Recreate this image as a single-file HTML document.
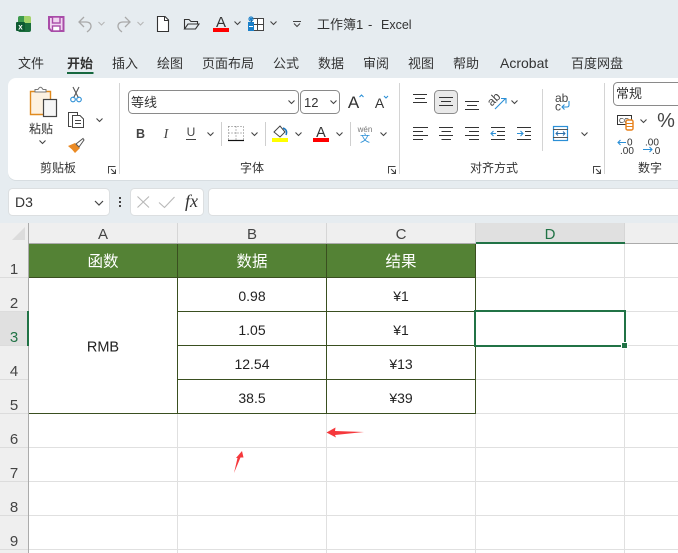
<!DOCTYPE html>
<html><head><meta charset="utf-8"><style>
html,body{margin:0;padding:0;width:678px;height:553px;overflow:hidden;background:#e6ecf0}
svg{display:block;position:absolute;left:0;top:0}
text{font-family:"Liberation Sans","Noto Sans CJK SC",sans-serif;fill:#333}
.t{font-size:13px}
.c{text-anchor:middle}
.cell{font-size:14px;text-anchor:middle;fill:#222}
.hd{font-size:15px;text-anchor:middle;fill:#444}
.rn{font-size:15px;text-anchor:middle;fill:#444}
.ch{fill:none;stroke:#444;stroke-width:1.1}
.ic{fill:none;stroke:#444;stroke-width:1}
.bl{fill:none;stroke:#2b8fd6;stroke-width:1.1}
.hl{stroke:#e0e0e0;stroke-width:1}
.tb{stroke:#3a4f20;stroke-width:1}
</style></head><body>
<svg width="678" height="553" viewBox="0 0 678 553" xmlns="http://www.w3.org/2000/svg">
<defs>
<path id="chev" d="M-3 -1.5L0 1.500L3 -1.500"/>
<path id="laun" d="M0.500 7.500V0.500H7.500M3 3L7 7M7.500 3.500V7.500H3.500"/>
</defs>
<rect width="678" height="553" fill="#e6ecf0"/>

<!-- QAT -->
<path d="M18 18Q18 16 20 16H24V23H18z" fill="#3d9a4e"/>
<path d="M24 16H29Q31 16 31 18V23H24z" fill="#a4d36a"/>
<path d="M24 23H31V30Q31 32 29 32H20Q18 32 18 30V28H24z" fill="#1a6e3c"/>
<rect x="16" y="22" width="9" height="9" rx="1" fill="#0e5a32"/>
<text x="20.500" y="29.500" font-size="8" font-weight="bold" text-anchor="middle" style="fill:#fff">x</text>
<path d="M49 17H63.500V31H51.500L49 28.500z" fill="#f0d6f0" stroke="#a94ca8" stroke-width="2"/>
<rect x="52.500" y="17" width="7.500" height="6" fill="#f0d6f0" stroke="#a94ca8" stroke-width="1.400"/>
<rect x="52.500" y="26" width="7.500" height="5" fill="#fff" stroke="#a94ca8" stroke-width="1.400"/>
<path d="M84 17L79 22L84 27M79 22H86Q91 22 91 26.500Q91 29 87 32" fill="none" stroke="#a9a9a9" stroke-width="1.300"/>
<use href="#chev" x="101.500" y="23.500" fill="none" stroke="#b5b5b5"/>
<path d="M125 17L130 22L125 27M130 22H123Q118 22 118 26.500Q118 29 122 32" fill="none" stroke="#a9a9a9" stroke-width="1.300"/>
<use href="#chev" x="140.500" y="23.500" fill="none" stroke="#b5b5b5"/>
<path d="M157.500 16.500H165L168.500 20V31.500H157.500z" fill="#fff" stroke="#333" stroke-width="1.100"/>
<path d="M164.500 16.500V20.500H168.500" fill="none" stroke="#333"/>
<path d="M184.500 29V19.500H189L191 21.500H197.500V24M184.500 29H195.500L199 24H188z" fill="none" stroke="#333" stroke-width="1.100"/>
<text x="221" y="27" font-size="15" class="c" style="fill:#333">A</text>
<rect x="213" y="28" width="16" height="4" fill="#f00"/>
<use href="#chev" x="237.500" y="23" class="ch"/>
<rect x="251.500" y="18.500" width="12" height="12" fill="#fff" stroke="#444"/>
<path d="M257.500 18.500V30.500M251.500 24.500H263.500" stroke="#444"/>
<rect x="248" y="22" width="6" height="9" fill="#1b80c9"/>
<path d="M251 16V22M248 19H254M249 17L253 21M253 17L249 21" stroke="#1b80c9"/>
<path d="M249 26.500H253" stroke="#fff"/>
<use href="#chev" x="273.500" y="23" class="ch"/>
<path d="M293 21.500H301" stroke="#444"/><use href="#chev" x="297" y="25" class="ch"/>
<text x="317" y="29" class="t">工作簿1</text><text x="368" y="29" class="t">-</text><text x="381" y="29" style="font-size:12.500px">Excel</text>

<!-- tabs -->
<text x="18" y="68" class="t">文件</text>
<text x="67" y="68" class="t" font-weight="bold">开始</text>
<rect x="67" y="72" width="26.500" height="2" fill="#17683f"/>
<text x="112" y="68" class="t">插入</text>
<text x="157" y="68" class="t">绘图</text>
<text x="202" y="68" class="t">页面布局</text>
<text x="273" y="68" class="t">公式</text>
<text x="318" y="68" class="t">数据</text>
<text x="363" y="68" class="t">审阅</text>
<text x="408" y="68" class="t">视图</text>
<text x="453" y="68" class="t">帮助</text>
<text x="500" y="68" style="font-size:14px">Acrobat</text>
<text x="571" y="68" class="t">百度网盘</text>

<!-- ribbon -->
<rect x="8" y="79" width="690" height="102" rx="8" fill="#cdd3d7" opacity=".6"/>
<rect x="8" y="78" width="690" height="102" rx="8" fill="#fff"/>
<path d="M119.500 83V174M399.500 83V174M604.500 83V174M542.500 89V151" stroke="#d4d4d4"/>

<!-- clipboard -->
<path d="M30.500 91.500H50.500V114.500H30.500z" fill="#fdf1e0" stroke="#e08a1e" stroke-width="1.400"/>
<path d="M35 92V89.500H38Q40.500 85 43 89.500H46V92z" fill="#fff" stroke="#777"/>
<rect x="43.500" y="99.500" width="13" height="17" fill="#f6f6f6" stroke="#444" stroke-width="1.200"/>
<text x="41" y="133" class="c" style="font-size:12px">粘贴</text>
<use href="#chev" x="42.500" y="142" class="ch"/>
<path d="M73 87L78.500 98M79 87L73.500 98" fill="none" stroke="#555" stroke-width="1.100"/>
<circle cx="73" cy="99.500" r="2.300" class="bl"/><circle cx="79" cy="99.500" r="2.300" class="bl"/>
<path d="M71.500 126.500H68.500V112.500H77.500V115" class="ic"/>
<path d="M72.500 115.500H80L83.500 119V127.500H72.500z" class="ic"/>
<path d="M75 120.500H81M75 123.500H81" stroke="#444"/>
<use href="#chev" x="99.500" y="120" class="ch"/>
<path d="M68 146L75 143L80 148L75 153Q72 149 68 146z" fill="#ea8a24"/>
<path d="M76 144L83 138.500L84 140L79 147z" fill="none" stroke="#555"/>
<text x="58" y="172" class="c" style="font-size:12px">剪贴板</text>
<use href="#laun" x="108" y="166" class="ic"/>

<!-- font -->
<rect x="128.500" y="90.500" width="170" height="23" rx="4" fill="#fff" stroke="#8a8a8a"/>
<text x="131" y="107" class="t">等线</text>
<use href="#chev" x="291.500" y="102" class="ch"/>
<rect x="300.500" y="90.500" width="39" height="23" rx="4" fill="#fff" stroke="#8a8a8a"/>
<text x="304" y="107" class="t">12</text>
<use href="#chev" x="333.500" y="102" class="ch"/>
<text x="353.500" y="108" font-size="17" class="c" style="fill:#333">A</text>
<path d="M359.500 97L361.500 95L363.500 97" class="bl"/>
<text x="379.500" y="108" font-size="14" class="c" style="fill:#333">A</text>
<path d="M384 96L386 98L388 96" class="bl"/>
<text x="140.500" y="138" font-size="12.500" font-weight="bold" class="c" style="fill:#444">B</text>
<text x="166" y="138" font-size="14" font-style="italic" class="c" style="font-family:'Liberation Serif';fill:#444">I</text>
<text x="191" y="136" font-size="12" class="c" style="fill:#444">U</text>
<path d="M186 139.500H196" stroke="#444"/>
<use href="#chev" x="210.500" y="134" class="ch"/>
<path d="M221.500 122V146M265.500 122V146M350.500 122V146" stroke="#cfcfcf"/>
<path d="M228.500 126.500H243.500V139.500M228.500 126.500V139.500M236 126.500V139.500M228.500 133H243.500" fill="none" stroke="#777" stroke-dasharray="1 2"/>
<path d="M228 140.500H244" stroke="#111" stroke-width="1.200"/>
<use href="#chev" x="254.500" y="134" class="ch"/>
<path d="M274 132L280 126L285 132L280 137z" class="ic"/>
<path d="M283 128Q288 130 286 135" fill="none" stroke="#1b75bc" stroke-width="1.500"/>
<rect x="272" y="138" width="16" height="4" fill="#ff0"/>
<use href="#chev" x="298.500" y="134" class="ch"/>
<text x="321" y="137" font-size="14.500" class="c" style="fill:#333">A</text>
<rect x="313" y="138" width="16" height="4" fill="#f00"/>
<use href="#chev" x="339.500" y="134" class="ch"/>
<text x="365" y="132" font-size="8" class="c" style="fill:#777">wén</text>
<text x="365" y="142" font-size="10" class="c" style="fill:#2b8fd6">文</text>
<use href="#chev" x="383.500" y="134" class="ch"/>
<text x="252" y="172" class="c" style="font-size:12px">字体</text>
<use href="#laun" x="388" y="166" class="ic"/>

<!-- alignment -->
<rect x="434.500" y="90.500" width="23" height="23" rx="4" fill="#e9e9e9" stroke="#8c8c8c"/>
<path d="M413 94.500H427M413 102.500H427M415 98.500H425M439 97.500H453M441 101.500H451M439 105.500H453M465 101.500H479M467 105.500H477M465 109.500H479" stroke="#333"/>
<text x="0" y="0" font-size="12" transform="translate(496.500,102) rotate(-45)" class="c" style="fill:#444">ab</text>
<path d="M495 109L505.500 98.500M501 98.500H506V103.500" class="bl"/>
<use href="#chev" x="514.500" y="102" class="ch"/>
<path d="M413 127.500H428M413 131.500H423M413 135.500H428M413 139.500H423M439 127.500H453M441.500 131.500H451M439 135.500H453M441.500 139.500H451M465 127.500H479M469 131.500H479M465 135.500H479M469 139.500H479M497 127.500H505M497 131.500H505M497 135.500H505M491 139.500H505M491 127.500H505M525 131.500H531M525 135.500H531M517 139.500H531M517 127.500H531" stroke="#333"/>
<path d="M496 133.500H491M493.500 131L491 133.500L493.500 136M517 133.500H523M520.500 131L523 133.500L520.500 136" class="bl"/>
<text x="555" y="102" font-size="12" style="fill:#444">ab</text>
<text x="555" y="110.500" font-size="12" style="fill:#444">c</text>
<path d="M569 101V105Q569 107 567 107H562M564.500 104.500L562 107L564.500 109.500" class="bl" stroke-width="1.300"/>
<rect x="553.500" y="126.500" width="14" height="14" fill="#fff" stroke="#2b8fd6" stroke-width="1.200"/>
<path d="M553 129.500H568M553 137.500H568" stroke="#555"/>
<path d="M556 133.500H565M558 131.500L556 133.500L558 135.500M563 131.500L565 133.500L563 135.500" stroke="#2b6ea8" fill="none"/>
<use href="#chev" x="584.500" y="134" class="ch"/>
<text x="494" y="172" class="c" style="font-size:12px">对齐方式</text>
<use href="#laun" x="593" y="166" class="ic"/>

<!-- number -->
<rect x="613.500" y="82.500" width="80" height="23" rx="4" fill="#fff" stroke="#8a8a8a"/>
<text x="616" y="98" class="t">常规</text>
<rect x="617.500" y="115.500" width="14" height="9" fill="#fff" stroke="#333"/>
<text x="624" y="123" font-size="7" class="c" style="fill:#333">CC</text>
<rect x="626" y="120" width="7" height="10" rx="1.500" fill="#fff" stroke="#e8811a" stroke-width="1.400"/>
<path d="M626 123.500H633M626 126.500H633" stroke="#e8811a"/>
<use href="#chev" x="643.500" y="121" class="ch"/>
<text x="666" y="127" font-size="20" class="c" style="fill:#444">%</text>
<path d="M626 142.500H618M620.500 140L618 142.500L620.500 145" class="bl"/>
<text x="627" y="145.500" font-size="10" style="fill:#333">0</text>
<text x="620" y="154" font-size="10" style="fill:#333">.00</text>
<text x="645" y="145.500" font-size="10" style="fill:#333">.00</text>
<path d="M643 149.500H652M649.500 147L652 149.500L649.500 152" class="bl"/>
<text x="652" y="154" font-size="10" style="fill:#333">.0</text>
<text x="650" y="172" class="c" style="font-size:12px">数字</text>

<!-- formula bar -->
<rect x="8.500" y="188.500" width="101" height="27" rx="4" fill="#fff" stroke="#dcdfe1"/>
<text x="15" y="207" style="font-size:14px;fill:#333">D3</text>
<path d="M95 201L99 205L103 201" fill="none" stroke="#444" stroke-width="1.200"/>
<rect x="119" y="197" width="2" height="2" fill="#444"/><rect x="119" y="201" width="2" height="2" fill="#444"/><rect x="119" y="205" width="2" height="2" fill="#444"/>
<rect x="130.500" y="188.500" width="73" height="27" rx="4" fill="#fff" stroke="#dcdfe1"/>
<path d="M137.500 196.500L149 207.500M149 196.500L137.500 207.500" stroke="#b8b8b8" stroke-width="1.100"/>
<path d="M159 202.500L164.500 207.500L174.500 197" fill="none" stroke="#b8b8b8" stroke-width="1.100"/>
<text x="191.500" y="207" font-size="18" font-style="italic" class="c" style="font-family:'Liberation Serif';fill:#333">fx</text>
<rect x="208.500" y="188.500" width="500" height="27" rx="4" fill="#fff" stroke="#dcdfe1"/>

<!-- grid -->
<rect x="0" y="223" width="678" height="330" fill="#fff"/>
<rect x="0" y="223" width="678" height="20" fill="#efefef"/>
<rect x="0" y="243" width="28" height="310" fill="#efefef"/>
<path d="M25 227V240H12z" fill="#dcdcdc"/>
<rect x="476" y="223" width="149" height="20" fill="#e0e0e0"/>
<rect x="0" y="311" width="28" height="34" fill="#e0e0e0"/>
<path d="M28 243.500H678" stroke="#ababab"/>
<path d="M28.500 223V553" stroke="#ababab"/>
<path d="M177.500 223V243M326.500 223V243M475.500 223V243M624.500 223V243" stroke="#d6d6d6"/>
<path d="M0 277.500H28M0 311.500H28M0 345.500H28M0 379.500H28M0 413.500H28M0 447.500H28M0 481.500H28M0 515.500H28M0 549.500H28" stroke="#dcdcdc"/>
<path d="M476 277.500H678M476 311.500H678M476 345.500H678M476 379.500H678M29 413.500H678M29 447.500H678M29 481.500H678M29 515.500H678M29 549.500H678" class="hl"/>
<path d="M624.500 244V553M177.500 414V553M326.500 414V553M475.500 414V553" class="hl"/>
<rect x="476" y="242" width="149" height="2" fill="#217346"/>
<rect x="27" y="311" width="2" height="35" fill="#217346"/>
<text x="103" y="239" class="hd">A</text><text x="252" y="239" class="hd">B</text><text x="401" y="239" class="hd">C</text><text x="550" y="239" class="hd" style="fill:#217346">D</text>
<text x="14" y="274" class="rn">1</text><text x="14" y="308" class="rn">2</text><text x="14" y="342" class="rn" style="fill:#217346">3</text><text x="14" y="376" class="rn">4</text><text x="14" y="410" class="rn">5</text><text x="14" y="444" class="rn">6</text><text x="14" y="478" class="rn">7</text><text x="14" y="512" class="rn">8</text><text x="14" y="546" class="rn">9</text>

<!-- table -->
<rect x="29" y="244" width="447" height="34" fill="#548235"/>
<path d="M29 277.500H476M178 311.500H476M178 345.500H476M178 379.500H476M29 413.500H476M177.500 244V414M326.500 244V414M475.500 244V414" class="tb"/>
<text x="103" y="266.500" style="font-size:15.500px;fill:#fff" class="c">函数</text>
<text x="252" y="266.500" style="font-size:15.500px;fill:#fff" class="c">数据</text>
<text x="401" y="266.500" style="font-size:15.500px;fill:#fff" class="c">结果</text>
<text x="103" y="351.500" class="cell" style="font-size:14.500px">RMB</text>
<text x="252" y="301" class="cell">0.98</text><text x="252" y="335" class="cell">1.05</text><text x="252" y="369" class="cell">12.54</text><text x="252" y="403" class="cell">38.5</text>
<text x="401" y="301" class="cell">¥1</text><text x="401" y="335" class="cell">¥1</text><text x="401" y="369" class="cell">¥13</text><text x="401" y="403" class="cell">¥39</text>

<!-- selection -->
<rect x="475" y="311" width="150" height="35" fill="none" stroke="#217346" stroke-width="2"/>
<rect x="621" y="342" width="7" height="7" fill="#fff"/>
<rect x="622" y="343" width="5" height="5" fill="#217346"/>

<!-- arrows -->
<path d="M326.500 432.500L335.500 427.500L335 431L364 432L335 435L336 437.500z" fill="#f5383c"/>
<path d="M242 451L243.500 457.500L240.500 457.500L234 473L237.500 458L236 458z" fill="#f5383c"/>
</svg>
</body></html>
